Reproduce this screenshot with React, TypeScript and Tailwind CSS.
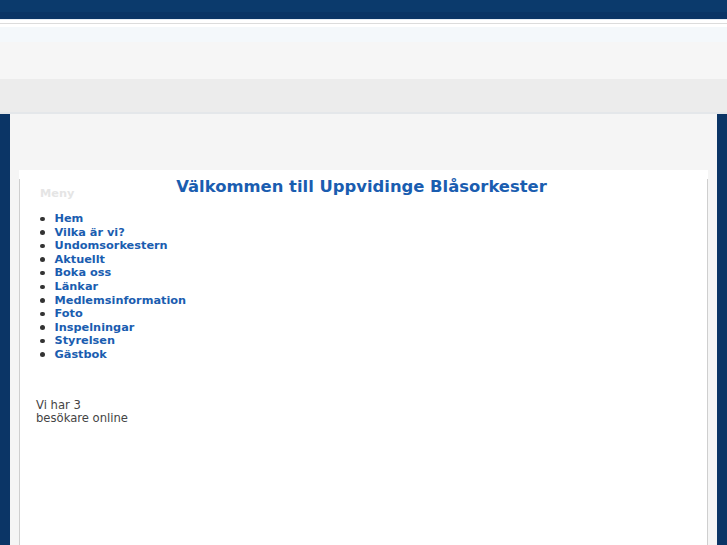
const menu = [
  'Hem',
  'Vilka är vi?',
  'Undomsorkestern',
  'Aktuellt',
  'Boka oss',
  'Länkar',
  'Medlemsinformation',
  'Foto',
  'Inspelningar',
  'Styrelsen',
  'Gästbok',
];

export default function App() {
  return (
    <div className="h-[545px] w-full overflow-hidden bg-white font-['DejaVu_Sans',sans-serif]">
      {/* Top bar */}
      <div className="h-[12px] bg-[#0b3a6c]" />
      <div className="h-[7px] bg-[#0a3465]" />
      <div className="h-[1px] bg-[#e6edf5]" />
      <div className="h-[3px] bg-white" />
      <div className="h-[1px] bg-[#dcdcdc]" />
      <div className="h-[3px] bg-white" />

      {/* Header */}
      <div className="h-[15px] bg-[#f4f8fb]" />
      <div className="h-[37px] bg-[#f6f6f6]" />
      <div className="h-[33px] bg-[#ececec]" />
      <div className="h-[2px] bg-[#e4e7ea]" />

      {/* Page */}
      <div className="flex h-[431px]">
        <div className="w-[10px] bg-[#0b3566]" />
        <div className="flex flex-1 flex-col bg-[#f5f5f5] px-[9px] pt-[56px]">
          <div className="flex-1 bg-white pt-[9px]">
            <div className="relative h-full border-x border-[#cfcfcf]">
              <h1 className="absolute left-0 right-[4px] -top-[2px] text-center text-[16.4px] font-bold leading-[20px] text-[#1a5db0]">
                Välkommen till Uppvidinge Blåsorkester
              </h1>
              <div className="pl-[20px] pt-[8px] text-[11.3px] font-bold leading-[14px] text-[#e5e5e5]">
                Meny
              </div>
              <ul className="mt-[11px] pl-[20px] text-[11.3px] font-bold leading-[13.6px] text-[#1a5db0]">
                {menu.map((m) => (
                  <li key={m} className="flex items-center">
                    <span className="mr-[10px] h-[4.5px] w-[4.5px] rounded-full bg-[#333]" />
                    {m}
                  </li>
                ))}
              </ul>
              <div className="mt-[37px] pl-[16px] text-[11.6px] leading-[13.6px] text-[#444]">
                Vi har 3
                <br />
                besökare online
              </div>
            </div>
          </div>
        </div>
        <div className="w-[10px] bg-[#0b3566]" />
      </div>
    </div>
  );
}
